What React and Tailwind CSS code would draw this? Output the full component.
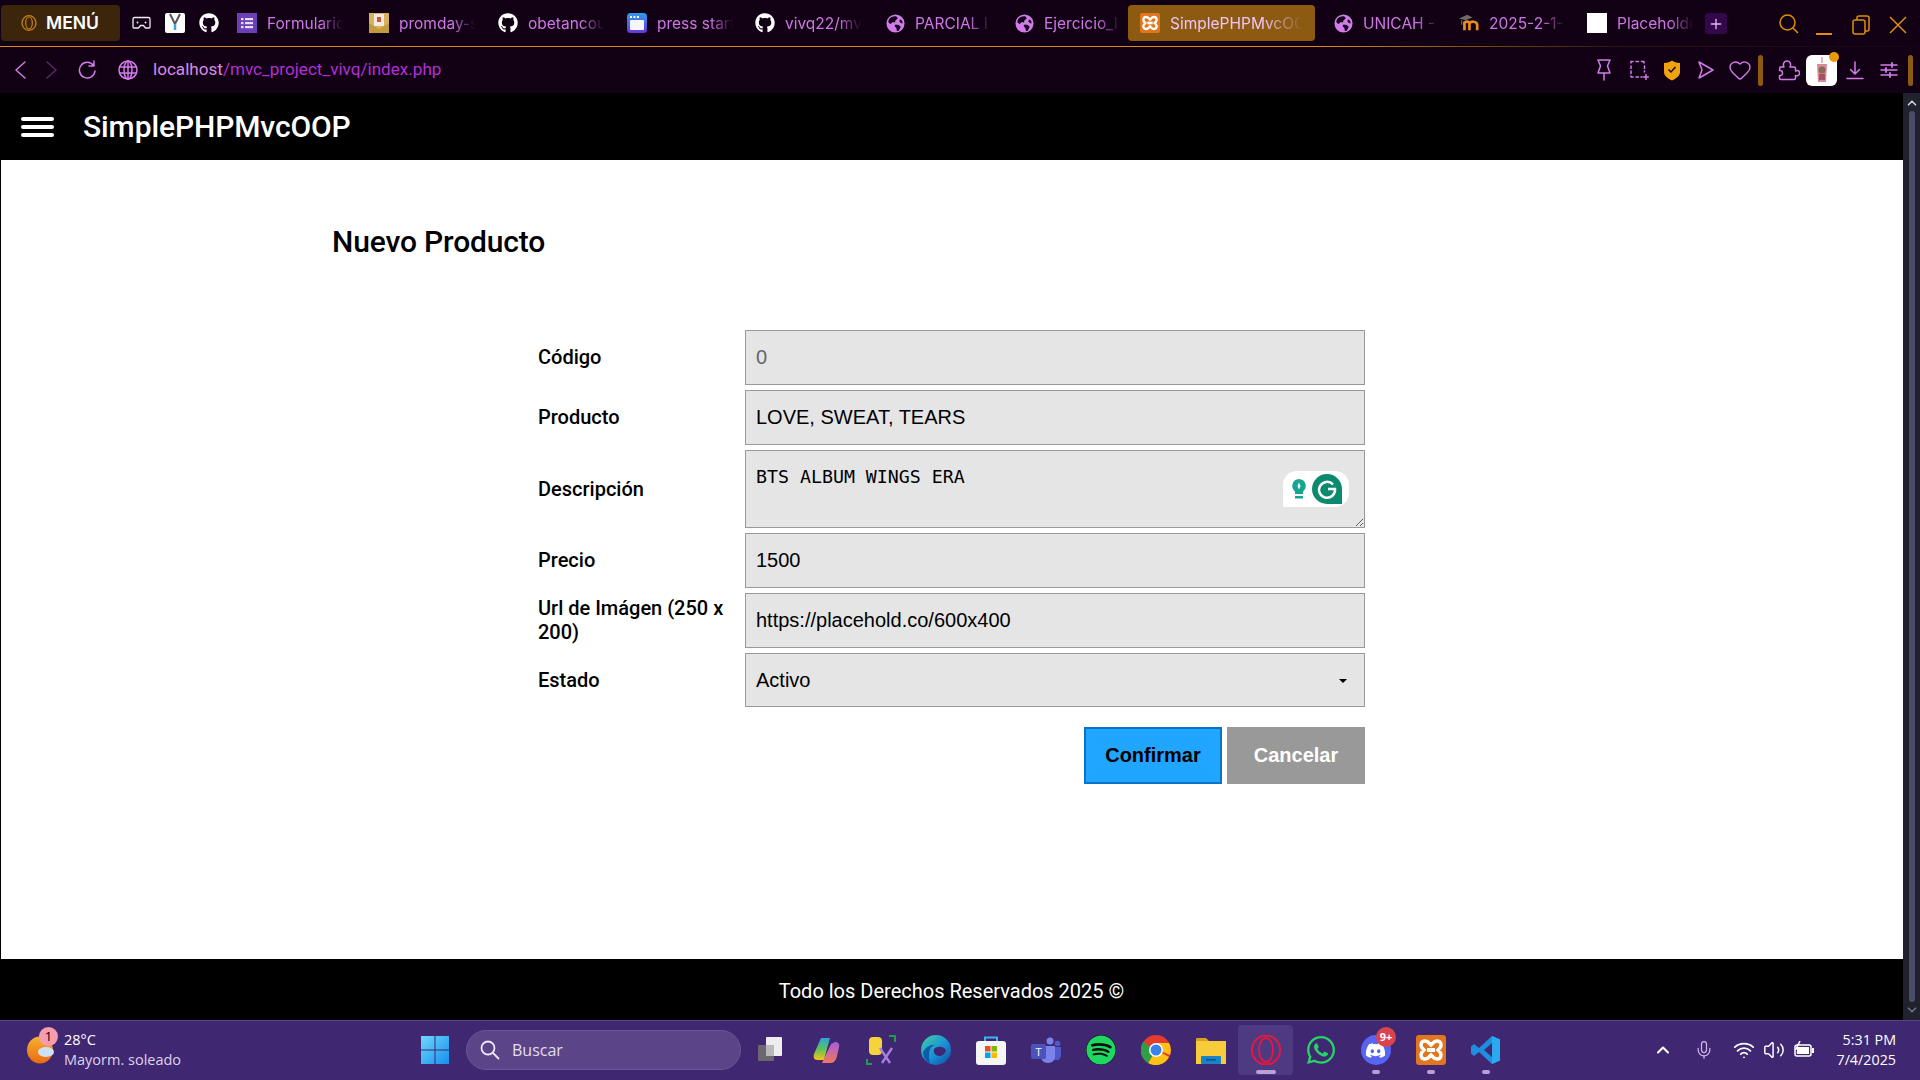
import React from "react";
import { Heart, Plus, ChevronUp, ChevronDown, Mic, Wifi, Volume2 } from "lucide-react";
import { FaGithub, FaSpotify, FaWhatsapp, FaDiscord } from "react-icons/fa";

const EarthIcon = ({ w = 19 }) => (
  <svg width={w} height={w} viewBox="0 0 20 20">
    <circle cx="10" cy="10" r="9.5" fill="#d27ce9" />
    <path d="M4 4.5c2-1.8 5-2.6 7-2l1.5 2.2-2.5 1.8-.5 2.5-2.5-.5L5 10.5 2.5 9c0-1.800.5-3.200 1.500-4.500zM10 11l3.500.5 2 2-2 4-2 .5-.5-3-2-2.500zM15 5.500l2 1.500.5 3-2-.5-1.500-2z" fill="#13001a" />
  </svg>
);

const GhIcon = () => <FaGithub size={20} color="#ffffff" />;

const FormsIcon = () => (
  <svg width="20" height="20" viewBox="0 0 20 20">
    <rect width="20" height="20" fill="#6b3fb5" />
    <rect x="4" y="5" width="2.500" height="2.200" fill="#e6dcf5" /><rect x="8" y="5" width="8" height="2.200" fill="#e6dcf5" />
    <rect x="4" y="9" width="2.500" height="2.200" fill="#e6dcf5" /><rect x="8" y="9" width="8" height="2.200" fill="#e6dcf5" />
    <rect x="4" y="13" width="2.500" height="2.200" fill="#e6dcf5" /><rect x="8" y="13" width="8" height="2.200" fill="#e6dcf5" />
  </svg>
);

const PromIcon = () => (
  <svg width="20" height="20" viewBox="0 0 20 20">
    <rect width="20" height="20" fill="#d8b25c" />
    <path d="M0 10 10 16 20 10V20H0z" fill="#c49a3f" />
    <rect x="5" y="1" width="10" height="12" fill="#f1ece0" />
    <rect x="8" y="4" width="4" height="5" fill="#c8563c" />
  </svg>
);

const PressIcon = () => (
  <svg width="20" height="20" viewBox="0 0 20 20">
    <defs><linearGradient id="pg" x1="0" y1="0" x2="0" y2="1"><stop offset="0" stopColor="#2f9de8" /><stop offset="1" stopColor="#6a35e0" /></linearGradient></defs>
    <rect width="20" height="20" rx="3.500" fill="url(#pg)" />
    <rect x="3" y="7" width="14" height="10" rx="1" fill="#f4f6fb" />
    <rect x="3" y="3" width="2" height="2" fill="#fff" /><rect x="6.500" y="3" width="2" height="2" fill="#fff" /><rect x="10" y="3" width="2" height="2" fill="#fff" />
  </svg>
);

const XamppIcon = ({ s = 20 }) => (
  <svg width={s} height={s} viewBox="0 0 30 30">
    <rect width="30" height="30" rx="3" fill="#e2761f" />
    <path d="M9 6c-4 0-5 4-3 7l2 2-2 2c-2 3-1 7 3 7 3 0 4-2 6-4 2 2 3 4 6 4 4 0 5-4 3-7l-2-2 2-2c2-3 1-7-3-7-3 0-4 2-6 4-2-2-3-4-6-4z" fill="none" stroke="#fff" strokeWidth="3.500" />
    <rect x="11" y="13" width="8" height="4" fill="#fff" />
  </svg>
);

const MoodleIcon = () => (
  <svg width="22" height="20" viewBox="0 0 22 20">
    <path d="M0 5 9 1l6 3-8 3z" fill="#6d6a6a" />
    <path d="M3 7v5" stroke="#8a8585" strokeWidth="1" />
    <path d="M6 18V9.500c3-2 5-1 5.500 1V18M11.500 10.500c1.500-2.500 8-3 8.500 1.500V18" fill="none" stroke="#e88a1f" strokeWidth="3" />
  </svg>
);

const Tab = ({ w, icon, text, active }) => (
  <div className={`flex h-[36px] shrink-0 items-center gap-[10px] rounded-[4px] pl-3 ${w} ${active ? "bg-[#8c5a10]" : ""}`}>
    <span className="flex w-[20px] shrink-0 justify-center">{icon}</span>
    <span className={`overflow-hidden whitespace-nowrap pt-[1px] text-[15.500px] [mask-image:linear-gradient(90deg,#000_68%,transparent_98%)] ${active ? "w-[136px] text-[#edc4f5]" : "w-[78px] text-[#cf76e6]"}`}>{text}</span>
  </div>
);

const Field = ({ label, children, flush }) => (
  <div className="flex items-center">
    <label className={`w-[207px] shrink-0 pr-2 text-[20px] font-medium leading-[24px] text-black ${flush ? "" : "pb-[2px]"}`}>{label}</label>
    <div className="relative w-[620px]">{children}</div>
  </div>
);

const inputCls = "block w-full border border-[#999999] bg-[#e5e5e5] px-[10px] text-[20px] outline-none [font-family:'Liberation_Sans',sans-serif]";

const WinLogo = () => (
  <svg width="30" height="30" viewBox="0 0 30 30">
    <defs><linearGradient id="wl" x1="0" y1="0" x2="1" y2="1"><stop offset="0" stopColor="#6fd6fb" /><stop offset="1" stopColor="#1590ee" /></linearGradient></defs>
    <path d="M1 1h13.500v13.500H1zM15.500 1H29v13.500H15.500zM1 15.500h13.500V29H1zM15.500 15.500H29V29H15.500z" fill="url(#wl)" />
  </svg>
);

const Item = ({ children, cls = "", dot, wide }) => (
  <div className={`relative flex h-[50px] w-[55px] items-center justify-center ${cls}`}>
    {children}
    {dot && <span className={`absolute bottom-[1px] left-1/2 h-[4px] -translate-x-1/2 rounded-full bg-[#b9a0d6] ${wide ? "w-[20px]" : "w-[8px]"}`} />}
  </div>
);

const Sw = ({ className, w = 20, h = 20, children }) => (
  <svg className={`shrink-0 ${className || ""}`} width={w} height={h} viewBox={`0 0 ${w} ${h}`} fill="none" stroke="#d27ce9" strokeWidth="1.500" strokeLinecap="round" strokeLinejoin="round">{children}</svg>
);

export default function App() {
  return (
    <div className="flex h-screen w-screen flex-col overflow-hidden bg-black [font-family:Inter,sans-serif]">
      {/* tab strip */}
      <div className="flex h-[46px] shrink-0 items-start bg-[#120014] pt-[5px]">
        <div className="ml-[1px] flex h-[36px] w-[119px] shrink-0 items-center gap-[9px] rounded-[4px] bg-[#3b260b] pl-[20px]">
          <svg width="16" height="16" viewBox="0 0 16 16"><ellipse cx="8" cy="8" rx="7" ry="7.300" fill="none" stroke="#c9820f" strokeWidth="1.300" /><ellipse cx="8" cy="8" rx="3.300" ry="6" fill="none" stroke="#c9820f" strokeWidth="1.200" /></svg>
          <span className="text-[17.500px] font-semibold text-white">MENÚ</span>
        </div>
        <div className="flex h-[36px] w-[105px] shrink-0 items-center pl-[12px]">
          <svg className="shrink-0" width="19" height="16" viewBox="0 0 19 16"><path d="M2.500 2.500h14a1.500 1.500 0 0 1 1.500 1.500v8a1 1 0 0 1-1 1h-3.500l-2-2.500h-3l-2 2.500H2a1 1 0 0 1-1-1V4a1.500 1.500 0 0 1 1.500-1.500z" fill="none" stroke="#f4e9f6" strokeWidth="1.300" /><circle cx="5.500" cy="7.500" r="1" fill="#f4e9f6" /><circle cx="13.500" cy="7.500" r="1" fill="#f4e9f6" /></svg>
          <span className="ml-[14px] flex h-[20px] w-[20px] shrink-0 items-start justify-center rounded-[2px] bg-white">
            <svg width="14" height="18" viewBox="0 0 14 18"><path d="M2 1l5 10 5-10" fill="none" stroke="#555" strokeWidth="2" /><path d="M7 11v6" stroke="#3aa6d8" strokeWidth="2.500" /></svg>
          </span>
          <span className="ml-[14px] shrink-0"><GhIcon /></span>
        </div>
        <Tab w="w-[132px]" icon={<FormsIcon />} text="Formulario" />
        <Tab w="w-[129px]" icon={<PromIcon />} text="promday-s" />
        <Tab w="w-[129px]" icon={<GhIcon />} text="obetancourt" />
        <Tab w="w-[128px]" icon={<PressIcon />} text="press start" />
        <Tab w="w-[130px]" icon={<GhIcon />} text="vivq22/mvc" />
        <Tab w="w-[129px]" icon={<EarthIcon />} text="PARCIAL I" />
        <Tab w="w-[126px]" icon={<EarthIcon />} text="Ejercicio_I" />
        <Tab w="w-[187px]" icon={<XamppIcon />} text="SimplePHPMvcOOP" active />
        <div className="w-[6px] shrink-0" />
        <Tab w="w-[126px]" icon={<EarthIcon />} text="UNICAH - S" />
        <Tab w="w-[128px]" icon={<MoodleIcon />} text="2025-2-1-" />
        <Tab w="w-[130px]" icon={<span className="block h-[20px] w-[20px] bg-white" />} text="Placeholder" />
        <span className="mt-[8px] flex h-[21px] w-[22px] shrink-0 items-center justify-center rounded-[3px] bg-[#33084a]"><Plus size={16} color="#e9b6f5" /></span>
        <svg className="ml-[52px] mt-[9px] shrink-0" width="20" height="20" viewBox="0 0 20 20" fill="none" stroke="#e08e0b" strokeWidth="1.500"><circle cx="8.500" cy="8.500" r="7.500" /><path d="M14 14l5 5" /></svg>
        <span className="ml-[17px] mt-[28px] h-[2px] w-[16px] shrink-0 bg-[#e08e0b]" />
        <svg className="ml-[20px] mt-[10px] shrink-0" width="18" height="20" viewBox="0 0 18 20" fill="none" stroke="#e08e0b" strokeWidth="1.500"><rect x="1" y="5" width="12" height="14" rx="2" /><path d="M5 5V3a2 2 0 0 1 2-2h8a2 2 0 0 1 2 2v11a2 2 0 0 1-2 2h-2" /></svg>
        <svg className="ml-[19px] mt-[11px] shrink-0" width="18" height="18" viewBox="0 0 18 18" fill="none" stroke="#e08e0b" strokeWidth="1.500"><path d="M1 1l16 16M17 1 1 17" /></svg>
      </div>
      <div className="h-[1px] shrink-0 bg-[linear-gradient(90deg,#d98c0a_0%,#d98c0a_69%,#2d170f_84%,#160416_100%)]" />
      {/* address row */}
      <div className="flex h-[46px] shrink-0 items-center bg-[#120014]">
        <Sw className="ml-[14px]" w={12} h={18}><path d="M11 1 2 9l9 8" /></Sw>
        <Sw className="ml-[20px]" w={12} h={18}><path d="M1 1l9 8-9 8" stroke="#5a2a6a" /></Sw>
        <Sw className="ml-[20px]" w={18} h={20}><path d="M15.500 5.500A7.800 7.800 0 1 0 17 11M16 1v5h-5" /></Sw>
        <Sw className="ml-[22px]" w={20} h={20}><circle cx="10" cy="10" r="9" /><ellipse cx="10" cy="10" rx="4" ry="9" /><path d="M1.500 7h17M1.500 13h17M10 1v18" /></Sw>
        <span className="ml-[15px] text-[17.100px] text-[#d78bea] [font-family:Roboto,sans-serif]">localhost<span className="text-[#b32fd6]">/mvc_project_vivq/index.php</span></span>
        <div className="flex-1" />
        <Sw w={16} h={22}><path d="M2 1h12l-2.500 6 2.500 7H2l2.500-7zM8 14v7" /></Sw>
        <Sw className="ml-[17px]" w={20} h={20}><path d="M2 3V1.500h2M7 1.500h2.500M12.500 1.500H15v1.500M15.500 6v2.500M15.500 11v1M2 6v2.500M2 11v2.500M2 16v1h2M7 17h2.500M12 17h1M17 14.500v5M14.500 17h5" /></Sw>
        <svg className="ml-[14px] shrink-0" width="18" height="21" viewBox="0 0 18 21"><path d="M1 3c4 0 6-1 8-2.500C11 2 13 3 17 3v9c0 4-4 6.500-8 8.500C5 18.500 1 16 1 12z" fill="#f0a30f" /><path d="M5.500 9.500 8 12l4.500-5" fill="none" stroke="#1a0818" strokeWidth="1.500" /></svg>
        <Sw className="ml-[16px]" w={18} h={20}><path d="M2 2 16 10 2 18 5 10z" /></Sw>
        <Heart className="ml-[13px] shrink-0" size={24} color="#d27ce9" strokeWidth={1.400} />
        <span className="ml-[6px] h-[31px] w-[5px] shrink-0 rounded-full bg-[#8c5a10]" />
        <Sw className="ml-[15px]" w={22} h={22}><path d="M2 8h4c-1.500-3 0-6 3-6s4.500 3 3 6h4c1 0 1.500.5 1.500 1.500v2.500c3-1.500 4 .5 4 2s-1 3.500-4 2.500V19c0 1-.5 1.500-1.500 1.500H3c-1 0-1.500-.5-1.500-1.500v-2.500c2 .5 3-1 3-2.500s-1-3-3-2.500z" /></Sw>
        <span className="relative ml-[6px] flex h-[31px] w-[31px] shrink-0 items-center justify-center rounded-[6px] bg-white">
          <svg width="14" height="27" viewBox="0 0 14 27"><path d="M7 0v6" stroke="#c86a8a" strokeWidth="1" /><path d="M2 7h10l-1 18H3z" fill="#d88a9c" /><circle cx="7" cy="13" r="3.500" fill="#8a6a50" /><rect x="4" y="17" width="6" height="6" fill="#a8506a" /></svg>
          <span className="absolute right-[-2px] top-[-3px] h-[10px] w-[10px] rounded-full bg-[#e89a0c]" />
        </span>
        <Sw className="ml-[9px]" w={18} h={20}><path d="M9 2v12M4.500 9.500 9 14l4.500-4.500M1 18.500h16" /></Sw>
        <Sw className="ml-[16px]" w={18} h={18}><path d="M1 4h16M1 9h16M1 14h16" /><path d="M12 2v4M6 7v4M10 12v4" strokeWidth="1.800" /></Sw>
        <span className="ml-[10px] mr-[7px] h-[31px] w-[5px] shrink-0 rounded-full bg-[#8c5a10]" />
      </div>
      {/* page */}
      <div className="flex min-h-0 flex-1">
        <div className="flex min-w-0 flex-1 flex-col [font-family:Roboto,sans-serif]">
          <header className="flex h-[67px] shrink-0 items-center bg-black pl-[21px]">
            <svg width="33" height="20" viewBox="0 0 33 20"><rect width="33" height="4" rx="2" fill="#fff" /><rect y="8" width="33" height="4" rx="2" fill="#fff" /><rect y="16" width="33" height="4" rx="2" fill="#fff" /></svg>
            <span className="ml-[29px] text-[30px] font-medium leading-none tracking-[-0.1px] text-white">SimplePHPMvcOOP</span>
          </header>
          <main className="min-h-0 flex-1 border-l border-black bg-white">
            <h1 className="pl-[331px] pt-[63px] text-[30px] font-medium leading-[38px] tracking-[-0.15px] text-black">Nuevo Producto</h1>
            <form className="ml-[537px] mt-[69px] flex w-[827px] flex-col gap-[5px]">
              <Field label="Código"><input readOnly value="0" className={`${inputCls} h-[55px] text-[#666666]`} /></Field>
              <Field label="Producto"><input readOnly value="LOVE, SWEAT, TEARS" className={`${inputCls} h-[55px] text-black`} /></Field>
              <Field label="Descripción" flush>
                <textarea readOnly value="BTS ALBUM WINGS ERA" className="block h-[78px] w-full border border-[#999999] bg-[#e5e5e5] px-[10px] pt-[14px] text-[18.250px] leading-[24px] text-black outline-none [font-family:'DejaVu_Sans_Mono',monospace]" />
                <span className="absolute right-[16px] top-[21px] flex h-[36px] w-[66px] items-center justify-center gap-[5px] rounded-[14px] rounded-bl-none bg-white">
                  <svg width="16" height="22" viewBox="0 0 16 22"><path d="M8 1a7 7 0 0 1 4 12.500V16H4v-2.500A7 7 0 0 1 8 1z" fill="#16a591" /><rect x="4" y="18" width="8" height="2.500" fill="#16a591" /><path d="M8 4.500 9.500 8 8 11.500 6.500 8z" fill="#fff" /></svg>
                  <span className="flex h-[30px] w-[30px] items-center justify-center rounded-full rounded-br-none bg-[#0c8a6f]">
                    <svg width="22" height="22" viewBox="0 0 22 22"><path d="M17 6.500A8 8 0 1 0 19 11h-7" fill="none" stroke="#fff" strokeWidth="2.500" /></svg>
                  </span>
                </span>
              </Field>
              <Field label="Precio"><input readOnly value="1500" className={`${inputCls} h-[55px] text-black`} /></Field>
              <Field label="Url de Imágen (250 x 200)"><input readOnly value="https://placehold.co/600x400" className={`${inputCls} h-[55px] text-black`} /></Field>
              <Field label="Estado" flush>
                <select defaultValue="Activo" className={`${inputCls} h-[54px] appearance-none text-black`}><option>Activo</option></select>
                <span className="absolute right-[18px] top-[26px] h-0 w-0 border-x-[4px] border-t-[4px] border-x-transparent border-t-black" />
              </Field>
              <div className="mt-[15px] flex justify-end gap-[5px]">
                <button type="button" className="h-[57px] w-[138px] border-2 border-[#0a74c4] bg-[#21a6ff] pb-[2px] text-[20px] font-bold text-black [font-family:'Liberation_Sans',sans-serif]">Confirmar</button>
                <button type="button" className="h-[57px] w-[138px] bg-[#999999] pb-[2px] text-[20px] font-bold text-white [font-family:'Liberation_Sans',sans-serif]">Cancelar</button>
              </div>
            </form>
          </main>
          <footer className="flex h-[61px] shrink-0 items-center justify-center bg-black pt-[3px] text-[20px] font-normal text-white">Todo los Derechos Reservados 2025 ©</footer>
        </div>
        <div className="flex w-[17px] shrink-0 flex-col items-center bg-[#20222e] py-[3px]">
          <ChevronUp size={14} color="#c9ccd8" strokeWidth={3} />
          <div className="my-[1px] w-[6px] flex-1 rounded-full bg-[#4a4d69]" />
          <ChevronDown size={14} color="#6e7080" strokeWidth={3} />
        </div>
      </div>
      {/* taskbar */}
      <div className="relative flex h-[60px] shrink-0 items-center border-t border-[#5a4684] bg-[#3f2871] pb-[1px] text-white [font-family:'Open_Sans',sans-serif]">
        <div className="relative ml-[27px] w-[37px] shrink-0">
          <svg width="30" height="28" viewBox="0 0 30 28"><defs><linearGradient id="sun" x1="0" y1="0" x2="0" y2="1"><stop offset="0" stopColor="#f4b32d" /><stop offset="1" stopColor="#ea6a12" /></linearGradient></defs><ellipse cx="13" cy="14" rx="13" ry="13.500" fill="url(#sun)" /><ellipse cx="19" cy="16" rx="8" ry="5" fill="#cfe0f5" /></svg>
          <span className="absolute left-[12px] top-[-9px] flex h-[19px] w-[19px] items-center justify-center rounded-full bg-[#f79cae] text-[13px] text-black">1</span>
        </div>
        <div className="flex w-[356px] shrink-0 flex-col text-[14.500px] leading-[20px]">
          <span>28°C</span>
          <span className="text-[#ddd3ec]">Mayorm. soleado</span>
        </div>
        <WinLogo />
        <div className="ml-[16px] flex h-[40px] w-[275px] shrink-0 items-center rounded-full border border-[#6a5594] bg-[#5b4588] pl-[13px]">
          <svg width="20" height="20" viewBox="0 0 20 20" fill="none" stroke="#eee6f6" strokeWidth="1.800"><circle cx="8" cy="8" r="6.500" /><path d="M13 13l6 6" /></svg>
          <span className="ml-[12px] text-[16px] text-[#e5dcf0]">Buscar</span>
        </div>
        <div className="ml-[2px] flex shrink-0">
          <Item>
            <svg width="26" height="26" viewBox="0 0 26 26"><rect x="0" y="8" width="16" height="16" rx="1" fill="#6b6670" /><rect x="8" y="0" width="16" height="19" rx="1" fill="#eeeeee" /><rect x="8" y="8" width="8" height="11" fill="#b9b8ba" /></svg>
          </Item>
          <Item>
            <svg width="30" height="30" viewBox="0 0 30 30"><defs><linearGradient id="cp1" x1="0" y1="0" x2="0" y2="1"><stop offset="0" stopColor="#28a5e0" /><stop offset=".5" stopColor="#5dc15a" /><stop offset="1" stopColor="#f5c518" /></linearGradient><linearGradient id="cp2" x1="0" y1="0" x2="0" y2="1"><stop offset="0" stopColor="#a35de0" /><stop offset="1" stopColor="#f2785a" /></linearGradient></defs><path d="M10 3h9l-6 22H6c-3 0-4-3-3-6z" fill="url(#cp1)" /><path d="M11 28h9c3 0 5-3 6-7l2-9c1-3-1-5-4-5l-4 2z" fill="url(#cp2)" /></svg>
          </Item>
          <Item>
            <svg width="30" height="30" viewBox="0 0 30 30"><path d="M1 24v5h5M23 1h6v6" fill="none" stroke="#1e9e4a" strokeWidth="2" /><rect x="3" y="2" width="13" height="18" rx="4" fill="#f5d33a" /><path d="M14 13l10 15M26 13 16 28" stroke="#a77fe0" strokeWidth="2.400" /></svg>
          </Item>
          <Item>
            <svg width="30" height="30" viewBox="0 0 30 30"><defs><linearGradient id="ed" x1="0" y1="0" x2="1" y2="1"><stop offset="0" stopColor="#3fd4a0" /><stop offset=".55" stopColor="#1a8fd8" /><stop offset="1" stopColor="#104a9c" /></linearGradient></defs><circle cx="15" cy="15" r="15" fill="url(#ed)" /><path d="M13 14c3-3 9-3 12 1-1 5-5 6-7 6-4 0-6-4-5-7z" fill="#3f2871" /><path d="M8 20c0-5 2-9 6-10-4-1-9 2-12 7 0 5 3 10 8 12-2-2-2-5-2-9z" fill="#0e5ca8" /></svg>
          </Item>
          <Item>
            <svg width="30" height="30" viewBox="0 0 30 30"><path d="M9 7V2.500h12V7" fill="none" stroke="#3ab4f2" strokeWidth="2" /><rect x="0" y="6" width="30" height="24" rx="3" fill="#f5f5f5" /><rect x="9" y="11" width="5.500" height="5.500" fill="#ea4e27" /><rect x="15.500" y="11" width="5.500" height="5.500" fill="#7fba00" /><rect x="9" y="17.500" width="5.500" height="5.500" fill="#00a4ef" /><rect x="15.500" y="17.500" width="5.500" height="5.500" fill="#ffb900" /></svg>
          </Item>
          <Item>
            <svg width="30" height="26" viewBox="0 0 30 26"><circle cx="19" cy="4" r="3.500" fill="#7b83eb" /><circle cx="26.500" cy="6.500" r="2.800" fill="#5059c9" /><path d="M22 10h8v8c0 3-2 5-4 5h-4z" fill="#5059c9" /><path d="M10 9h14v11c0 3-3 6-7 6s-7-3-7-6z" fill="#7b83eb" /><rect x="0" y="7" width="15" height="15" rx="2" fill="#4b53bc" /><text x="7.500" y="19" fontSize="11" fill="#fff" textAnchor="middle">T</text></svg>
          </Item>
          <Item><FaSpotify size={30} color="#1ed760" className="rounded-full bg-[#101010]" /></Item>
          <Item>
            <svg width="30" height="30" viewBox="0 0 30 30"><circle cx="15" cy="15" r="15" fill="#e33b2e" /><path d="M15 15 28 22A15 15 0 0 1 7 28z" fill="#fbc116" /><path d="M15 15 7 28A15 15 0 0 1 2 7z" fill="#2f9e44" /><path d="M15 8h13a15 15 0 0 1 1 12l-7-3z" fill="#fbc116" /><circle cx="15" cy="15" r="7" fill="#fff" /><circle cx="15" cy="15" r="5.500" fill="#3b82e8" /></svg>
          </Item>
          <Item>
            <svg width="30" height="27" viewBox="0 0 30 27"><path d="M0 2a1 1 0 0 1 1-1h9l3 3h-13z" fill="#d9a21a" /><rect y="4" width="30" height="23" fill="#f7cb3a" /><rect x="5" y="19" width="20" height="8" rx="1" fill="#1783c9" /><rect x="10" y="22" width="10" height="1.500" fill="#0d4f80" /></svg>
          </Item>
          <Item cls="rounded-[4px] bg-[#4e3a80]" dot wide>
            <svg width="30" height="30" viewBox="0 0 30 30"><ellipse cx="15" cy="15" rx="14" ry="14.500" fill="none" stroke="#e5173f" strokeWidth="2" /><ellipse cx="15" cy="15" rx="7" ry="12" fill="none" stroke="#e5173f" strokeWidth="1.800" /></svg>
          </Item>
          <Item><FaWhatsapp size={32} color="#25d366" /></Item>
          <Item dot>
            <span className="flex h-[30px] w-[30px] items-center justify-center rounded-full bg-[#5865f2]"><FaDiscord size={21} color="#fff" /></span>
            <span className="absolute left-[28px] top-[2px] flex h-[20px] w-[20px] items-center justify-center rounded-full bg-[#d9444f] text-[11px] font-bold text-white">9+</span>
          </Item>
          <Item dot><XamppIcon s={30} /></Item>
          <Item dot>
            <svg width="30" height="30" viewBox="0 0 30 30"><path d="M21 1 29 4.500v21L21 29 8 17l-5 4-3-2.500v-7L3 9l5 4z" fill="#1f8ee0" /><path d="M21 1 29 4.500v21L21 29z" fill="#29a9ee" /><path d="M21 8v14l-8-7z" fill="#3f2871" /></svg>
          </Item>
        </div>
        <div className="flex-1" />
        <ChevronUp className="shrink-0" size={20} color="#ffffff" strokeWidth={2.500} />
        <Mic className="ml-[21px] shrink-0" size={20} color="#cfb6e8" strokeWidth={1.500} />
        <Wifi className="ml-[19px] shrink-0" size={22} color="#ffffff" strokeWidth={2} />
        <Volume2 className="ml-[8px] shrink-0" size={22} color="#ffffff" strokeWidth={1.600} />
        <svg className="ml-[9px] shrink-0" width="20" height="18" viewBox="0 0 20 18"><rect x="1" y="4" width="16" height="11" rx="2" fill="none" stroke="#fff" strokeWidth="1.500" /><rect x="3" y="6" width="12" height="7" fill="#fff" /><rect x="18" y="7" width="2" height="5" fill="#fff" /><path d="M6 0 2 8h3L3 12" fill="none" stroke="#fff" strokeWidth="1.500" /></svg>
        <div className="ml-[20px] mr-[24px] flex w-[62px] shrink-0 flex-col items-end whitespace-nowrap text-[14.300px] leading-[20px]">
          <span>5:31 PM</span>
          <span>7/4/2025</span>
        </div>
      </div>
    </div>
  );
}
